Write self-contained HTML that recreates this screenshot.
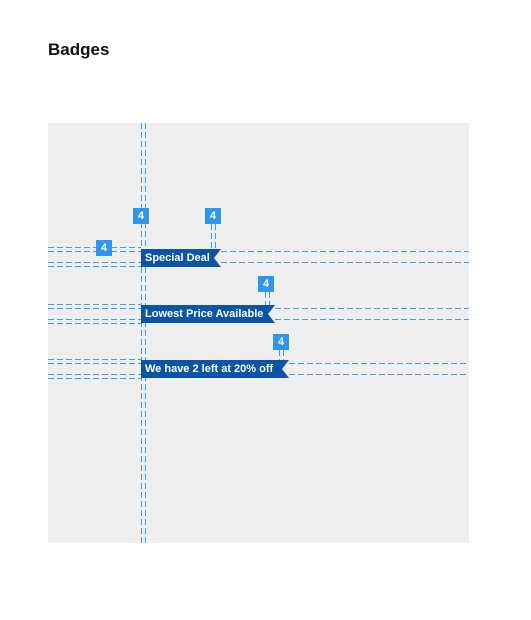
<!DOCTYPE html><html><head><style>
body{margin:0;width:531px;height:620px;background:#fff;position:relative;font-family:"Liberation Sans",sans-serif;overflow:hidden}
h1{position:absolute;left:48px;top:40px;margin:0;font-size:17px;font-weight:bold;color:#111}
.panel{position:absolute;left:48px;top:123px;width:421px;height:420px;background:#efefef}
.lbl{position:absolute;width:16px;height:16px;background:#2f96f0;color:#fff;font-size:11px;font-weight:bold;text-align:center;line-height:16px}
.b{position:absolute;height:18px;color:#fff;font-size:11px;font-weight:bold;line-height:18px;padding-left:4px}
.b svg{position:absolute;left:0;top:0}
.b span{position:relative}
#ov{position:absolute;left:0;top:0}
</style></head><body>
<h1>Badges</h1>
<div class="panel"></div>
<svg id="ov" width="531" height="620" shape-rendering="crispEdges"><g stroke="#3d9ef2" stroke-width="1" stroke-dasharray="6 3" fill="none">
<path d="M141.5 123V543M145.5 123V543"/>
<path d="M48 247.5H141M48 251.5H141M48 262.5H141M48 266.5H141M221 251.5H469M221 262.5H469M211.5 224V249M215.5 224V249"/>
<path d="M48 304.5H141M48 308.5H141M48 319.5H141M48 323.5H141M275 308.5H469M275 319.5H469M265.5 292V305M269.5 292V305"/>
<path d="M48 359.5H141M48 363.5H141M48 374.5H141M48 378.5H141M289 363.5H469M289 374.5H469M279.5 350V360M283.5 350V360"/>
</g></svg>

<div class="b" style="left:141px;top:249px;width:76px"><svg width="80" height="18"><polygon points="0,0 80,0 73,9 80,18 0,18" fill="#0b55a6"/></svg><span>Special Deal</span></div>
<div class="b" style="left:141px;top:305px;width:130px"><svg width="134" height="18"><polygon points="0,0 134,0 127,9 134,18 0,18" fill="#0b55a6"/></svg><span>Lowest Price Available</span></div>
<div class="b" style="left:141px;top:360px;width:144px"><svg width="148" height="18"><polygon points="0,0 148,0 141,9 148,18 0,18" fill="#0b55a6"/></svg><span>We have 2 left at 20% off</span></div>

<div class="lbl" style="left:133px;top:208px">4</div>
<div class="lbl" style="left:205px;top:208px">4</div>
<div class="lbl" style="left:96px;top:240px">4</div>
<div class="lbl" style="left:258px;top:276px">4</div>
<div class="lbl" style="left:273px;top:334px">4</div>
</body></html>
